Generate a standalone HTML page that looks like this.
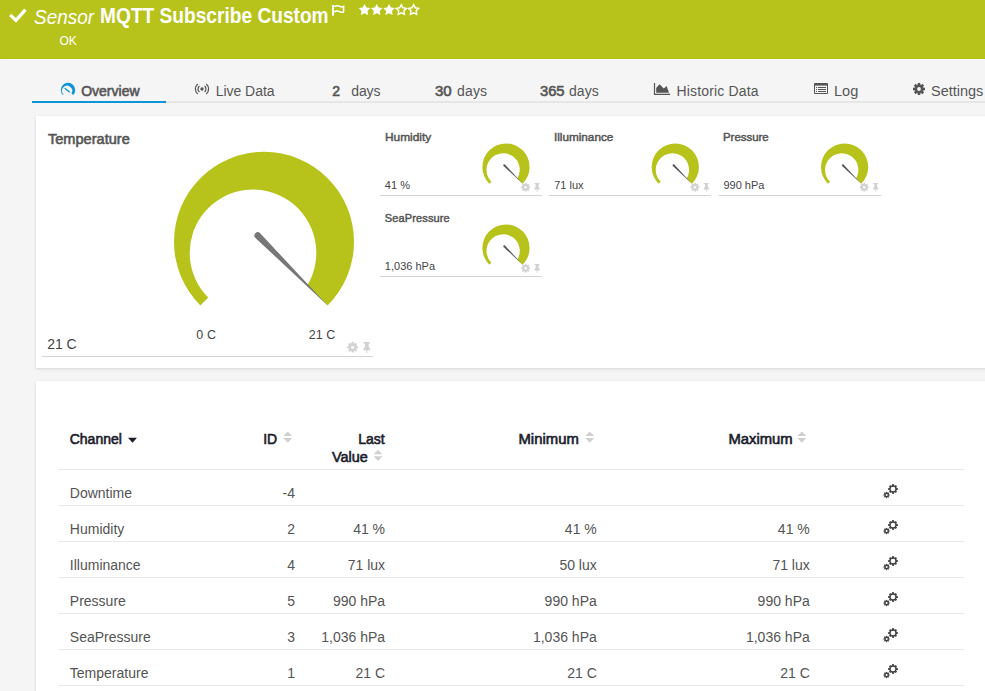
<!DOCTYPE html>
<html><head><meta charset="utf-8"><style>
html,body{margin:0;padding:0;width:985px;height:691px;overflow:hidden;background:#f5f5f5;position:relative}
.abs{position:absolute}
</style></head><body>
<div class="abs" style="left:0;top:0;width:985px;height:59px;background:#b7c31b"></div>
<div class="abs" style="left:0;top:58px;width:985px;height:1px;background:#b3c012"></div>
<div class="abs" style="left:1px;top:59px;width:983px;height:1px;background:#fafafc"></div>
<div class="abs" style="left:32px;top:101px;width:953px;height:2px;background:#e6e6e6"></div>
<div class="abs" style="left:32px;top:101px;width:134px;height:2px;background:#0b95d6"></div>
<div class="abs" style="left:36px;top:116px;width:960px;height:252px;background:#fff;box-shadow:0 1px 3px rgba(0,0,0,0.14)"></div>
<div class="abs" style="left:36px;top:381px;width:960px;height:330px;background:#fff;box-shadow:0 1px 3px rgba(0,0,0,0.14)"></div>
<div class="abs" style="left:42px;top:356px;width:331px;height:1px;background:#d4d4d4"></div>
<div class="abs" style="left:380.0px;top:195.0px;width:162px;height:1px;background:#d4d4d4"></div>
<div class="abs" style="left:549.3px;top:195.0px;width:162px;height:1px;background:#d4d4d4"></div>
<div class="abs" style="left:718.6px;top:195.0px;width:162px;height:1px;background:#d4d4d4"></div>
<div class="abs" style="left:380.0px;top:276.0px;width:162px;height:1px;background:#d4d4d4"></div>
<div class="abs" style="left:59px;top:469px;width:905px;height:1px;background:#e8e8e8"></div>
<div class="abs" style="left:59px;top:505px;width:905px;height:1px;background:#e8e8e8"></div>
<div class="abs" style="left:59px;top:541px;width:905px;height:1px;background:#e8e8e8"></div>
<div class="abs" style="left:59px;top:577px;width:905px;height:1px;background:#e8e8e8"></div>
<div class="abs" style="left:59px;top:613px;width:905px;height:1px;background:#e8e8e8"></div>
<div class="abs" style="left:59px;top:649px;width:905px;height:1px;background:#e8e8e8"></div>
<div class="abs" style="left:59px;top:685px;width:905px;height:1px;background:#e8e8e8"></div>
<svg class="abs" style="left:0;top:0" width="985" height="691" viewBox="0 0 985 691">
<path d="M200.36 305.44 A90.00 90.00 0 1 1 327.64 305.44 L307.39 285.19 A63.30 63.30 0 1 0 208.24 297.56 Z" fill="#b7c31b"/>
<path d="M327.64 305.44 L260.11 233.24 A3.30 3.30 0 0 0 255.44 237.91 Z" fill="#777"/>
<path d="M489.29 183.71 A23.62 23.62 0 1 1 522.71 183.71 L517.39 178.39 A16.62 16.62 0 1 0 491.36 181.64 Z" fill="#b7c31b"/>
<path d="M522.71 183.71 L504.94 164.53 A1.00 1.00 0 0 0 503.53 165.94 Z" fill="#555"/>
<path d="M658.59 183.71 A23.62 23.62 0 1 1 692.01 183.71 L686.69 178.39 A16.62 16.62 0 1 0 660.66 181.64 Z" fill="#b7c31b"/>
<path d="M692.01 183.71 L674.24 164.53 A1.00 1.00 0 0 0 672.83 165.94 Z" fill="#555"/>
<path d="M827.89 183.71 A23.62 23.62 0 1 1 861.31 183.71 L855.99 178.39 A16.62 16.62 0 1 0 829.96 181.64 Z" fill="#b7c31b"/>
<path d="M861.31 183.71 L843.54 164.53 A1.00 1.00 0 0 0 842.13 165.94 Z" fill="#555"/>
<path d="M489.29 264.71 A23.62 23.62 0 1 1 522.71 264.71 L517.39 259.39 A16.62 16.62 0 1 0 491.36 262.64 Z" fill="#b7c31b"/>
<path d="M522.71 264.71 L504.94 245.53 A1.00 1.00 0 0 0 503.53 246.94 Z" fill="#555"/>
<path d="M10.2 14.8 L16.0 20.4 L25.4 9.6" stroke="#fff" stroke-width="3.2" fill="none"/>
<rect x="332" y="5" width="2" height="10.7" fill="#fff"/>
<path d="M334.2 6.6 C336.5 5.2 338.5 5.6 340 6.4 C341.5 7.2 342.6 7.0 343.6 6.4 L343.6 11.8 C342.6 12.4 341.5 12.6 340 11.8 C338.5 11.0 336.5 10.6 334.2 12.0" stroke="#fff" stroke-width="1.5" fill="none"/>
<polygon points="364.50,3.90 366.35,7.45 370.30,8.11 367.50,10.97 368.09,14.94 364.50,13.15 360.91,14.94 361.50,10.97 358.70,8.11 362.65,7.45" fill="#fff"/>
<polygon points="376.77,3.90 378.62,7.45 382.57,8.11 379.77,10.97 380.36,14.94 376.77,13.15 373.18,14.94 373.77,10.97 370.97,8.11 374.92,7.45" fill="#fff"/>
<polygon points="389.04,3.90 390.89,7.45 394.84,8.11 392.04,10.97 392.63,14.94 389.04,13.15 385.45,14.94 386.04,10.97 383.24,8.11 387.19,7.45" fill="#fff"/>
<polygon points="401.31,4.70 402.93,7.78 406.35,8.36 403.93,10.85 404.43,14.29 401.31,12.75 398.19,14.29 398.69,10.85 396.27,8.36 399.69,7.78" fill="none" stroke="#fff" stroke-width="1.45" stroke-linejoin="miter"/>
<polygon points="413.58,4.70 415.20,7.78 418.62,8.36 416.20,10.85 416.70,14.29 413.58,12.75 410.46,14.29 410.96,10.85 408.54,8.36 411.96,7.78" fill="none" stroke="#fff" stroke-width="1.45" stroke-linejoin="miter"/>
<path d="M62.91 95.09 A7.20 7.20 0 1 1 73.09 95.09 L71.47 93.47 A5.06 5.06 0 1 0 63.54 94.46 Z" fill="#0b95d6"/>
<path d="M64.6 88.2 L69.8 92.2" stroke="#0b95d6" stroke-width="1.3"/>
<circle cx="202" cy="89" r="1.7" fill="#555"/>
<path d="M199.43 85.94 A4.00 4.00 0 0 0 199.43 92.06" stroke="#555" stroke-width="1.25" fill="none"/>
<path d="M204.57 92.06 A4.00 4.00 0 0 0 204.57 85.94" stroke="#555" stroke-width="1.25" fill="none"/>
<path d="M197.76 83.94 A6.60 6.60 0 0 0 197.76 94.06" stroke="#555" stroke-width="1.25" fill="none"/>
<path d="M206.24 94.06 A6.60 6.60 0 0 0 206.24 83.94" stroke="#555" stroke-width="1.25" fill="none"/>
<path d="M654.5 83 V94.4 H670.2" stroke="#555" stroke-width="1.2" fill="none"/>
<path d="M656.2 92.7 V88.0 L659.5 84.3 L663.8 88.6 L666.6 86.0 L669.0 92.7 Z" fill="#555"/>
<rect x="814" y="83" width="14" height="11" rx="1" ry="1" fill="#555"/>
<rect x="815" y="85.6" width="12" height="7.4" fill="#f5f5f5"/>
<rect x="816" y="87" width="1" height="1" fill="#555"/>
<rect x="818" y="87" width="8" height="1" fill="#555"/>
<rect x="816" y="89" width="1" height="1" fill="#555"/>
<rect x="818" y="89" width="8" height="1" fill="#555"/>
<rect x="816" y="91" width="1" height="1" fill="#555"/>
<rect x="818" y="91" width="8" height="1" fill="#555"/>
<circle cx="919.00" cy="89.00" r="4.60" fill="#555"/>
<rect x="917.74" y="83.00" width="2.52" height="6.00" fill="#555" transform="rotate(0.0 919.00 89.00)"/>
<rect x="917.74" y="83.00" width="2.52" height="6.00" fill="#555" transform="rotate(45.0 919.00 89.00)"/>
<rect x="917.74" y="83.00" width="2.52" height="6.00" fill="#555" transform="rotate(90.0 919.00 89.00)"/>
<rect x="917.74" y="83.00" width="2.52" height="6.00" fill="#555" transform="rotate(135.0 919.00 89.00)"/>
<rect x="917.74" y="83.00" width="2.52" height="6.00" fill="#555" transform="rotate(180.0 919.00 89.00)"/>
<rect x="917.74" y="83.00" width="2.52" height="6.00" fill="#555" transform="rotate(225.0 919.00 89.00)"/>
<rect x="917.74" y="83.00" width="2.52" height="6.00" fill="#555" transform="rotate(270.0 919.00 89.00)"/>
<rect x="917.74" y="83.00" width="2.52" height="6.00" fill="#555" transform="rotate(315.0 919.00 89.00)"/>
<circle cx="919.00" cy="89.00" r="1.90" fill="#f5f5f5"/>
<circle cx="352.60" cy="347.20" r="4.00" fill="#d2d2d2"/>
<rect x="351.49" y="341.90" width="2.23" height="5.30" fill="#d2d2d2" transform="rotate(0.0 352.60 347.20)"/>
<rect x="351.49" y="341.90" width="2.23" height="5.30" fill="#d2d2d2" transform="rotate(45.0 352.60 347.20)"/>
<rect x="351.49" y="341.90" width="2.23" height="5.30" fill="#d2d2d2" transform="rotate(90.0 352.60 347.20)"/>
<rect x="351.49" y="341.90" width="2.23" height="5.30" fill="#d2d2d2" transform="rotate(135.0 352.60 347.20)"/>
<rect x="351.49" y="341.90" width="2.23" height="5.30" fill="#d2d2d2" transform="rotate(180.0 352.60 347.20)"/>
<rect x="351.49" y="341.90" width="2.23" height="5.30" fill="#d2d2d2" transform="rotate(225.0 352.60 347.20)"/>
<rect x="351.49" y="341.90" width="2.23" height="5.30" fill="#d2d2d2" transform="rotate(270.0 352.60 347.20)"/>
<rect x="351.49" y="341.90" width="2.23" height="5.30" fill="#d2d2d2" transform="rotate(315.0 352.60 347.20)"/>
<circle cx="352.60" cy="347.20" r="1.50" fill="#fff"/>
<path d="M0.6 0 h6.8 v1.4 h-1.0 v3.6 l1.6 2.1 v1.1 h-3.0 v2.9 h-1.0 v-2.9 h-3.0 v-1.1 l1.6 -2.1 v-3.6 h-1.0 Z" fill="#d2d2d2" transform="translate(362.30 342.00) scale(1.000)"/>
<circle cx="525.60" cy="187.20" r="3.30" fill="#d2d2d2"/>
<rect x="524.68" y="182.80" width="1.85" height="4.40" fill="#d2d2d2" transform="rotate(0.0 525.60 187.20)"/>
<rect x="524.68" y="182.80" width="1.85" height="4.40" fill="#d2d2d2" transform="rotate(45.0 525.60 187.20)"/>
<rect x="524.68" y="182.80" width="1.85" height="4.40" fill="#d2d2d2" transform="rotate(90.0 525.60 187.20)"/>
<rect x="524.68" y="182.80" width="1.85" height="4.40" fill="#d2d2d2" transform="rotate(135.0 525.60 187.20)"/>
<rect x="524.68" y="182.80" width="1.85" height="4.40" fill="#d2d2d2" transform="rotate(180.0 525.60 187.20)"/>
<rect x="524.68" y="182.80" width="1.85" height="4.40" fill="#d2d2d2" transform="rotate(225.0 525.60 187.20)"/>
<rect x="524.68" y="182.80" width="1.85" height="4.40" fill="#d2d2d2" transform="rotate(270.0 525.60 187.20)"/>
<rect x="524.68" y="182.80" width="1.85" height="4.40" fill="#d2d2d2" transform="rotate(315.0 525.60 187.20)"/>
<circle cx="525.60" cy="187.20" r="1.20" fill="#fff"/>
<path d="M0.6 0 h6.8 v1.4 h-1.0 v3.6 l1.6 2.1 v1.1 h-3.0 v2.9 h-1.0 v-2.9 h-3.0 v-1.1 l1.6 -2.1 v-3.6 h-1.0 Z" fill="#d2d2d2" transform="translate(533.60 183.00) scale(0.780)"/>
<circle cx="694.90" cy="187.20" r="3.30" fill="#d2d2d2"/>
<rect x="693.98" y="182.80" width="1.85" height="4.40" fill="#d2d2d2" transform="rotate(0.0 694.90 187.20)"/>
<rect x="693.98" y="182.80" width="1.85" height="4.40" fill="#d2d2d2" transform="rotate(45.0 694.90 187.20)"/>
<rect x="693.98" y="182.80" width="1.85" height="4.40" fill="#d2d2d2" transform="rotate(90.0 694.90 187.20)"/>
<rect x="693.98" y="182.80" width="1.85" height="4.40" fill="#d2d2d2" transform="rotate(135.0 694.90 187.20)"/>
<rect x="693.98" y="182.80" width="1.85" height="4.40" fill="#d2d2d2" transform="rotate(180.0 694.90 187.20)"/>
<rect x="693.98" y="182.80" width="1.85" height="4.40" fill="#d2d2d2" transform="rotate(225.0 694.90 187.20)"/>
<rect x="693.98" y="182.80" width="1.85" height="4.40" fill="#d2d2d2" transform="rotate(270.0 694.90 187.20)"/>
<rect x="693.98" y="182.80" width="1.85" height="4.40" fill="#d2d2d2" transform="rotate(315.0 694.90 187.20)"/>
<circle cx="694.90" cy="187.20" r="1.20" fill="#fff"/>
<path d="M0.6 0 h6.8 v1.4 h-1.0 v3.6 l1.6 2.1 v1.1 h-3.0 v2.9 h-1.0 v-2.9 h-3.0 v-1.1 l1.6 -2.1 v-3.6 h-1.0 Z" fill="#d2d2d2" transform="translate(702.90 183.00) scale(0.780)"/>
<circle cx="864.20" cy="187.20" r="3.30" fill="#d2d2d2"/>
<rect x="863.28" y="182.80" width="1.85" height="4.40" fill="#d2d2d2" transform="rotate(0.0 864.20 187.20)"/>
<rect x="863.28" y="182.80" width="1.85" height="4.40" fill="#d2d2d2" transform="rotate(45.0 864.20 187.20)"/>
<rect x="863.28" y="182.80" width="1.85" height="4.40" fill="#d2d2d2" transform="rotate(90.0 864.20 187.20)"/>
<rect x="863.28" y="182.80" width="1.85" height="4.40" fill="#d2d2d2" transform="rotate(135.0 864.20 187.20)"/>
<rect x="863.28" y="182.80" width="1.85" height="4.40" fill="#d2d2d2" transform="rotate(180.0 864.20 187.20)"/>
<rect x="863.28" y="182.80" width="1.85" height="4.40" fill="#d2d2d2" transform="rotate(225.0 864.20 187.20)"/>
<rect x="863.28" y="182.80" width="1.85" height="4.40" fill="#d2d2d2" transform="rotate(270.0 864.20 187.20)"/>
<rect x="863.28" y="182.80" width="1.85" height="4.40" fill="#d2d2d2" transform="rotate(315.0 864.20 187.20)"/>
<circle cx="864.20" cy="187.20" r="1.20" fill="#fff"/>
<path d="M0.6 0 h6.8 v1.4 h-1.0 v3.6 l1.6 2.1 v1.1 h-3.0 v2.9 h-1.0 v-2.9 h-3.0 v-1.1 l1.6 -2.1 v-3.6 h-1.0 Z" fill="#d2d2d2" transform="translate(872.20 183.00) scale(0.780)"/>
<circle cx="525.60" cy="268.20" r="3.30" fill="#d2d2d2"/>
<rect x="524.68" y="263.80" width="1.85" height="4.40" fill="#d2d2d2" transform="rotate(0.0 525.60 268.20)"/>
<rect x="524.68" y="263.80" width="1.85" height="4.40" fill="#d2d2d2" transform="rotate(45.0 525.60 268.20)"/>
<rect x="524.68" y="263.80" width="1.85" height="4.40" fill="#d2d2d2" transform="rotate(90.0 525.60 268.20)"/>
<rect x="524.68" y="263.80" width="1.85" height="4.40" fill="#d2d2d2" transform="rotate(135.0 525.60 268.20)"/>
<rect x="524.68" y="263.80" width="1.85" height="4.40" fill="#d2d2d2" transform="rotate(180.0 525.60 268.20)"/>
<rect x="524.68" y="263.80" width="1.85" height="4.40" fill="#d2d2d2" transform="rotate(225.0 525.60 268.20)"/>
<rect x="524.68" y="263.80" width="1.85" height="4.40" fill="#d2d2d2" transform="rotate(270.0 525.60 268.20)"/>
<rect x="524.68" y="263.80" width="1.85" height="4.40" fill="#d2d2d2" transform="rotate(315.0 525.60 268.20)"/>
<circle cx="525.60" cy="268.20" r="1.20" fill="#fff"/>
<path d="M0.6 0 h6.8 v1.4 h-1.0 v3.6 l1.6 2.1 v1.1 h-3.0 v2.9 h-1.0 v-2.9 h-3.0 v-1.1 l1.6 -2.1 v-3.6 h-1.0 Z" fill="#d2d2d2" transform="translate(533.60 264.00) scale(0.780)"/>
<polygon points="283.30,436.00 287.75,431.50 292.20,436.00" fill="#d0d0d0"/>
<polygon points="283.30,437.90 292.20,437.90 287.75,442.80" fill="#d0d0d0"/>
<polygon points="373.60,454.30 378.05,449.80 382.50,454.30" fill="#d0d0d0"/>
<polygon points="373.60,456.20 382.50,456.20 378.05,461.10" fill="#d0d0d0"/>
<polygon points="585.30,436.00 589.75,431.50 594.20,436.00" fill="#d0d0d0"/>
<polygon points="585.30,437.90 594.20,437.90 589.75,442.80" fill="#d0d0d0"/>
<polygon points="797.40,436.00 801.85,431.50 806.30,436.00" fill="#d0d0d0"/>
<polygon points="797.40,437.90 806.30,437.90 801.85,442.80" fill="#d0d0d0"/>
<polygon points="128,437.8 137,437.8 132.5,442.8" fill="#1c1c2c"/>
<circle cx="893.00" cy="489.00" r="3.70" fill="#444"/>
<rect x="891.99" y="484.20" width="2.02" height="4.80" fill="#444" transform="rotate(0.0 893.00 489.00)"/>
<rect x="891.99" y="484.20" width="2.02" height="4.80" fill="#444" transform="rotate(45.0 893.00 489.00)"/>
<rect x="891.99" y="484.20" width="2.02" height="4.80" fill="#444" transform="rotate(90.0 893.00 489.00)"/>
<rect x="891.99" y="484.20" width="2.02" height="4.80" fill="#444" transform="rotate(135.0 893.00 489.00)"/>
<rect x="891.99" y="484.20" width="2.02" height="4.80" fill="#444" transform="rotate(180.0 893.00 489.00)"/>
<rect x="891.99" y="484.20" width="2.02" height="4.80" fill="#444" transform="rotate(225.0 893.00 489.00)"/>
<rect x="891.99" y="484.20" width="2.02" height="4.80" fill="#444" transform="rotate(270.0 893.00 489.00)"/>
<rect x="891.99" y="484.20" width="2.02" height="4.80" fill="#444" transform="rotate(315.0 893.00 489.00)"/>
<circle cx="893.00" cy="489.00" r="2.30" fill="#fff"/>
<circle cx="886.60" cy="495.00" r="2.40" fill="#444"/>
<rect x="885.95" y="491.90" width="1.30" height="3.10" fill="#444" transform="rotate(0.0 886.60 495.00)"/>
<rect x="885.95" y="491.90" width="1.30" height="3.10" fill="#444" transform="rotate(45.0 886.60 495.00)"/>
<rect x="885.95" y="491.90" width="1.30" height="3.10" fill="#444" transform="rotate(90.0 886.60 495.00)"/>
<rect x="885.95" y="491.90" width="1.30" height="3.10" fill="#444" transform="rotate(135.0 886.60 495.00)"/>
<rect x="885.95" y="491.90" width="1.30" height="3.10" fill="#444" transform="rotate(180.0 886.60 495.00)"/>
<rect x="885.95" y="491.90" width="1.30" height="3.10" fill="#444" transform="rotate(225.0 886.60 495.00)"/>
<rect x="885.95" y="491.90" width="1.30" height="3.10" fill="#444" transform="rotate(270.0 886.60 495.00)"/>
<rect x="885.95" y="491.90" width="1.30" height="3.10" fill="#444" transform="rotate(315.0 886.60 495.00)"/>
<circle cx="886.60" cy="495.00" r="1.00" fill="#fff"/>
<circle cx="893.00" cy="525.00" r="3.70" fill="#444"/>
<rect x="891.99" y="520.20" width="2.02" height="4.80" fill="#444" transform="rotate(0.0 893.00 525.00)"/>
<rect x="891.99" y="520.20" width="2.02" height="4.80" fill="#444" transform="rotate(45.0 893.00 525.00)"/>
<rect x="891.99" y="520.20" width="2.02" height="4.80" fill="#444" transform="rotate(90.0 893.00 525.00)"/>
<rect x="891.99" y="520.20" width="2.02" height="4.80" fill="#444" transform="rotate(135.0 893.00 525.00)"/>
<rect x="891.99" y="520.20" width="2.02" height="4.80" fill="#444" transform="rotate(180.0 893.00 525.00)"/>
<rect x="891.99" y="520.20" width="2.02" height="4.80" fill="#444" transform="rotate(225.0 893.00 525.00)"/>
<rect x="891.99" y="520.20" width="2.02" height="4.80" fill="#444" transform="rotate(270.0 893.00 525.00)"/>
<rect x="891.99" y="520.20" width="2.02" height="4.80" fill="#444" transform="rotate(315.0 893.00 525.00)"/>
<circle cx="893.00" cy="525.00" r="2.30" fill="#fff"/>
<circle cx="886.60" cy="531.00" r="2.40" fill="#444"/>
<rect x="885.95" y="527.90" width="1.30" height="3.10" fill="#444" transform="rotate(0.0 886.60 531.00)"/>
<rect x="885.95" y="527.90" width="1.30" height="3.10" fill="#444" transform="rotate(45.0 886.60 531.00)"/>
<rect x="885.95" y="527.90" width="1.30" height="3.10" fill="#444" transform="rotate(90.0 886.60 531.00)"/>
<rect x="885.95" y="527.90" width="1.30" height="3.10" fill="#444" transform="rotate(135.0 886.60 531.00)"/>
<rect x="885.95" y="527.90" width="1.30" height="3.10" fill="#444" transform="rotate(180.0 886.60 531.00)"/>
<rect x="885.95" y="527.90" width="1.30" height="3.10" fill="#444" transform="rotate(225.0 886.60 531.00)"/>
<rect x="885.95" y="527.90" width="1.30" height="3.10" fill="#444" transform="rotate(270.0 886.60 531.00)"/>
<rect x="885.95" y="527.90" width="1.30" height="3.10" fill="#444" transform="rotate(315.0 886.60 531.00)"/>
<circle cx="886.60" cy="531.00" r="1.00" fill="#fff"/>
<circle cx="893.00" cy="561.00" r="3.70" fill="#444"/>
<rect x="891.99" y="556.20" width="2.02" height="4.80" fill="#444" transform="rotate(0.0 893.00 561.00)"/>
<rect x="891.99" y="556.20" width="2.02" height="4.80" fill="#444" transform="rotate(45.0 893.00 561.00)"/>
<rect x="891.99" y="556.20" width="2.02" height="4.80" fill="#444" transform="rotate(90.0 893.00 561.00)"/>
<rect x="891.99" y="556.20" width="2.02" height="4.80" fill="#444" transform="rotate(135.0 893.00 561.00)"/>
<rect x="891.99" y="556.20" width="2.02" height="4.80" fill="#444" transform="rotate(180.0 893.00 561.00)"/>
<rect x="891.99" y="556.20" width="2.02" height="4.80" fill="#444" transform="rotate(225.0 893.00 561.00)"/>
<rect x="891.99" y="556.20" width="2.02" height="4.80" fill="#444" transform="rotate(270.0 893.00 561.00)"/>
<rect x="891.99" y="556.20" width="2.02" height="4.80" fill="#444" transform="rotate(315.0 893.00 561.00)"/>
<circle cx="893.00" cy="561.00" r="2.30" fill="#fff"/>
<circle cx="886.60" cy="567.00" r="2.40" fill="#444"/>
<rect x="885.95" y="563.90" width="1.30" height="3.10" fill="#444" transform="rotate(0.0 886.60 567.00)"/>
<rect x="885.95" y="563.90" width="1.30" height="3.10" fill="#444" transform="rotate(45.0 886.60 567.00)"/>
<rect x="885.95" y="563.90" width="1.30" height="3.10" fill="#444" transform="rotate(90.0 886.60 567.00)"/>
<rect x="885.95" y="563.90" width="1.30" height="3.10" fill="#444" transform="rotate(135.0 886.60 567.00)"/>
<rect x="885.95" y="563.90" width="1.30" height="3.10" fill="#444" transform="rotate(180.0 886.60 567.00)"/>
<rect x="885.95" y="563.90" width="1.30" height="3.10" fill="#444" transform="rotate(225.0 886.60 567.00)"/>
<rect x="885.95" y="563.90" width="1.30" height="3.10" fill="#444" transform="rotate(270.0 886.60 567.00)"/>
<rect x="885.95" y="563.90" width="1.30" height="3.10" fill="#444" transform="rotate(315.0 886.60 567.00)"/>
<circle cx="886.60" cy="567.00" r="1.00" fill="#fff"/>
<circle cx="893.00" cy="597.00" r="3.70" fill="#444"/>
<rect x="891.99" y="592.20" width="2.02" height="4.80" fill="#444" transform="rotate(0.0 893.00 597.00)"/>
<rect x="891.99" y="592.20" width="2.02" height="4.80" fill="#444" transform="rotate(45.0 893.00 597.00)"/>
<rect x="891.99" y="592.20" width="2.02" height="4.80" fill="#444" transform="rotate(90.0 893.00 597.00)"/>
<rect x="891.99" y="592.20" width="2.02" height="4.80" fill="#444" transform="rotate(135.0 893.00 597.00)"/>
<rect x="891.99" y="592.20" width="2.02" height="4.80" fill="#444" transform="rotate(180.0 893.00 597.00)"/>
<rect x="891.99" y="592.20" width="2.02" height="4.80" fill="#444" transform="rotate(225.0 893.00 597.00)"/>
<rect x="891.99" y="592.20" width="2.02" height="4.80" fill="#444" transform="rotate(270.0 893.00 597.00)"/>
<rect x="891.99" y="592.20" width="2.02" height="4.80" fill="#444" transform="rotate(315.0 893.00 597.00)"/>
<circle cx="893.00" cy="597.00" r="2.30" fill="#fff"/>
<circle cx="886.60" cy="603.00" r="2.40" fill="#444"/>
<rect x="885.95" y="599.90" width="1.30" height="3.10" fill="#444" transform="rotate(0.0 886.60 603.00)"/>
<rect x="885.95" y="599.90" width="1.30" height="3.10" fill="#444" transform="rotate(45.0 886.60 603.00)"/>
<rect x="885.95" y="599.90" width="1.30" height="3.10" fill="#444" transform="rotate(90.0 886.60 603.00)"/>
<rect x="885.95" y="599.90" width="1.30" height="3.10" fill="#444" transform="rotate(135.0 886.60 603.00)"/>
<rect x="885.95" y="599.90" width="1.30" height="3.10" fill="#444" transform="rotate(180.0 886.60 603.00)"/>
<rect x="885.95" y="599.90" width="1.30" height="3.10" fill="#444" transform="rotate(225.0 886.60 603.00)"/>
<rect x="885.95" y="599.90" width="1.30" height="3.10" fill="#444" transform="rotate(270.0 886.60 603.00)"/>
<rect x="885.95" y="599.90" width="1.30" height="3.10" fill="#444" transform="rotate(315.0 886.60 603.00)"/>
<circle cx="886.60" cy="603.00" r="1.00" fill="#fff"/>
<circle cx="893.00" cy="633.00" r="3.70" fill="#444"/>
<rect x="891.99" y="628.20" width="2.02" height="4.80" fill="#444" transform="rotate(0.0 893.00 633.00)"/>
<rect x="891.99" y="628.20" width="2.02" height="4.80" fill="#444" transform="rotate(45.0 893.00 633.00)"/>
<rect x="891.99" y="628.20" width="2.02" height="4.80" fill="#444" transform="rotate(90.0 893.00 633.00)"/>
<rect x="891.99" y="628.20" width="2.02" height="4.80" fill="#444" transform="rotate(135.0 893.00 633.00)"/>
<rect x="891.99" y="628.20" width="2.02" height="4.80" fill="#444" transform="rotate(180.0 893.00 633.00)"/>
<rect x="891.99" y="628.20" width="2.02" height="4.80" fill="#444" transform="rotate(225.0 893.00 633.00)"/>
<rect x="891.99" y="628.20" width="2.02" height="4.80" fill="#444" transform="rotate(270.0 893.00 633.00)"/>
<rect x="891.99" y="628.20" width="2.02" height="4.80" fill="#444" transform="rotate(315.0 893.00 633.00)"/>
<circle cx="893.00" cy="633.00" r="2.30" fill="#fff"/>
<circle cx="886.60" cy="639.00" r="2.40" fill="#444"/>
<rect x="885.95" y="635.90" width="1.30" height="3.10" fill="#444" transform="rotate(0.0 886.60 639.00)"/>
<rect x="885.95" y="635.90" width="1.30" height="3.10" fill="#444" transform="rotate(45.0 886.60 639.00)"/>
<rect x="885.95" y="635.90" width="1.30" height="3.10" fill="#444" transform="rotate(90.0 886.60 639.00)"/>
<rect x="885.95" y="635.90" width="1.30" height="3.10" fill="#444" transform="rotate(135.0 886.60 639.00)"/>
<rect x="885.95" y="635.90" width="1.30" height="3.10" fill="#444" transform="rotate(180.0 886.60 639.00)"/>
<rect x="885.95" y="635.90" width="1.30" height="3.10" fill="#444" transform="rotate(225.0 886.60 639.00)"/>
<rect x="885.95" y="635.90" width="1.30" height="3.10" fill="#444" transform="rotate(270.0 886.60 639.00)"/>
<rect x="885.95" y="635.90" width="1.30" height="3.10" fill="#444" transform="rotate(315.0 886.60 639.00)"/>
<circle cx="886.60" cy="639.00" r="1.00" fill="#fff"/>
<circle cx="893.00" cy="669.00" r="3.70" fill="#444"/>
<rect x="891.99" y="664.20" width="2.02" height="4.80" fill="#444" transform="rotate(0.0 893.00 669.00)"/>
<rect x="891.99" y="664.20" width="2.02" height="4.80" fill="#444" transform="rotate(45.0 893.00 669.00)"/>
<rect x="891.99" y="664.20" width="2.02" height="4.80" fill="#444" transform="rotate(90.0 893.00 669.00)"/>
<rect x="891.99" y="664.20" width="2.02" height="4.80" fill="#444" transform="rotate(135.0 893.00 669.00)"/>
<rect x="891.99" y="664.20" width="2.02" height="4.80" fill="#444" transform="rotate(180.0 893.00 669.00)"/>
<rect x="891.99" y="664.20" width="2.02" height="4.80" fill="#444" transform="rotate(225.0 893.00 669.00)"/>
<rect x="891.99" y="664.20" width="2.02" height="4.80" fill="#444" transform="rotate(270.0 893.00 669.00)"/>
<rect x="891.99" y="664.20" width="2.02" height="4.80" fill="#444" transform="rotate(315.0 893.00 669.00)"/>
<circle cx="893.00" cy="669.00" r="2.30" fill="#fff"/>
<circle cx="886.60" cy="675.00" r="2.40" fill="#444"/>
<rect x="885.95" y="671.90" width="1.30" height="3.10" fill="#444" transform="rotate(0.0 886.60 675.00)"/>
<rect x="885.95" y="671.90" width="1.30" height="3.10" fill="#444" transform="rotate(45.0 886.60 675.00)"/>
<rect x="885.95" y="671.90" width="1.30" height="3.10" fill="#444" transform="rotate(90.0 886.60 675.00)"/>
<rect x="885.95" y="671.90" width="1.30" height="3.10" fill="#444" transform="rotate(135.0 886.60 675.00)"/>
<rect x="885.95" y="671.90" width="1.30" height="3.10" fill="#444" transform="rotate(180.0 886.60 675.00)"/>
<rect x="885.95" y="671.90" width="1.30" height="3.10" fill="#444" transform="rotate(225.0 886.60 675.00)"/>
<rect x="885.95" y="671.90" width="1.30" height="3.10" fill="#444" transform="rotate(270.0 886.60 675.00)"/>
<rect x="885.95" y="671.90" width="1.30" height="3.10" fill="#444" transform="rotate(315.0 886.60 675.00)"/>
<circle cx="886.60" cy="675.00" r="1.00" fill="#fff"/>
</svg>
<div style="font-family:'Liberation Sans',sans-serif;font-size:20px;font-weight:normal;font-style:italic;white-space:nowrap;position:absolute;top:7.07px;line-height:20px;color:#fff;left:33.70px;transform:scaleX(0.9454);transform-origin:0.80px 0">Sensor</div>
<div style="font-family:'Liberation Sans',sans-serif;font-size:21.5px;font-weight:bold;font-style:normal;white-space:nowrap;position:absolute;top:6.20px;line-height:21.5px;color:#fff;left:99.54px;transform:scaleX(0.8898);transform-origin:0.86px 0">MQTT Subscribe Custom</div>
<div style="font-family:'Liberation Sans',sans-serif;font-size:12px;font-weight:normal;font-style:normal;white-space:nowrap;position:absolute;top:34.54px;line-height:12px;color:#fff;letter-spacing:-0.184px;left:59.52px">OK</div>
<div style="font-family:'Liberation Sans',sans-serif;font-size:14px;font-weight:normal;font-style:normal;white-space:nowrap;-webkit-text-stroke:0.59px #555;position:absolute;top:84.15px;line-height:14px;color:#555;letter-spacing:0.009px;left:81.14px">Overview</div>
<div style="font-family:'Liberation Sans',sans-serif;font-size:14px;font-weight:normal;font-style:normal;white-space:nowrap;position:absolute;top:84.15px;line-height:14px;color:#555;letter-spacing:-0.042px;left:215.74px">Live Data</div>
<div style="font-family:'Liberation Sans',sans-serif;font-size:14px;font-weight:normal;font-style:normal;white-space:nowrap;-webkit-text-stroke:0.59px #555;position:absolute;top:84.15px;line-height:14px;color:#555;left:332.24px">2</div>
<div style="font-family:'Liberation Sans',sans-serif;font-size:14px;font-weight:normal;font-style:normal;white-space:nowrap;position:absolute;top:84.15px;line-height:14px;color:#555;letter-spacing:-0.119px;left:351.24px">days</div>
<div style="font-family:'Liberation Sans',sans-serif;font-size:14px;font-weight:normal;font-style:normal;white-space:nowrap;-webkit-text-stroke:0.59px #555;position:absolute;top:84.15px;line-height:14px;color:#555;left:434.94px;transform:scaleX(1.0721);transform-origin:0.56px 0">30</div>
<div style="font-family:'Liberation Sans',sans-serif;font-size:14px;font-weight:normal;font-style:normal;white-space:nowrap;position:absolute;top:84.15px;line-height:14px;color:#555;letter-spacing:0.147px;left:457.04px">days</div>
<div style="font-family:'Liberation Sans',sans-serif;font-size:14px;font-weight:normal;font-style:normal;white-space:nowrap;-webkit-text-stroke:0.59px #555;position:absolute;top:84.15px;line-height:14px;color:#555;left:540.24px;transform:scaleX(1.0522);transform-origin:0.56px 0">365</div>
<div style="font-family:'Liberation Sans',sans-serif;font-size:14px;font-weight:normal;font-style:normal;white-space:nowrap;position:absolute;top:84.15px;line-height:14px;color:#555;letter-spacing:0.014px;left:569.04px">days</div>
<div style="font-family:'Liberation Sans',sans-serif;font-size:14px;font-weight:normal;font-style:normal;white-space:nowrap;position:absolute;top:84.15px;line-height:14px;color:#555;letter-spacing:0.165px;left:676.44px">Historic Data</div>
<div style="font-family:'Liberation Sans',sans-serif;font-size:14px;font-weight:normal;font-style:normal;white-space:nowrap;position:absolute;top:84.15px;line-height:14px;color:#555;left:834.24px;transform:scaleX(1.0387);transform-origin:0.56px 0">Log</div>
<div style="font-family:'Liberation Sans',sans-serif;font-size:14px;font-weight:normal;font-style:normal;white-space:nowrap;position:absolute;top:84.15px;line-height:14px;color:#555;left:931.04px;transform:scaleX(1.0329);transform-origin:0.56px 0">Settings</div>
<div style="font-family:'Liberation Sans',sans-serif;font-size:14px;font-weight:normal;font-style:normal;white-space:nowrap;-webkit-text-stroke:0.59px #555;position:absolute;top:132.35px;line-height:14px;color:#555;left:47.54px;transform:scaleX(1.0404);transform-origin:0.56px 0">Temperature</div>
<div style="font-family:'Liberation Sans',sans-serif;font-size:14px;font-weight:normal;font-style:normal;white-space:nowrap;position:absolute;top:337.15px;line-height:14px;color:#444;left:47.14px">21 C</div>
<div style="font-family:'Liberation Sans',sans-serif;font-size:12.5px;font-weight:normal;font-style:normal;white-space:nowrap;position:absolute;top:328.72px;line-height:12.5px;color:#444;letter-spacing:0.123px;left:196.30px">0 C</div>
<div style="font-family:'Liberation Sans',sans-serif;font-size:12.5px;font-weight:normal;font-style:normal;white-space:nowrap;position:absolute;top:328.72px;line-height:12.5px;color:#444;letter-spacing:0.031px;left:308.80px">21 C</div>
<div style="font-family:'Liberation Sans',sans-serif;font-size:11px;font-weight:normal;font-style:normal;white-space:nowrap;-webkit-text-stroke:0.46px #555;position:absolute;top:131.79px;line-height:11px;color:#555;left:384.86px;transform:scaleX(1.0807);transform-origin:0.44px 0">Humidity</div>
<div style="font-family:'Liberation Sans',sans-serif;font-size:11px;font-weight:normal;font-style:normal;white-space:nowrap;position:absolute;top:180.39px;line-height:11px;color:#444;left:384.86px">41 %</div>
<div style="font-family:'Liberation Sans',sans-serif;font-size:11px;font-weight:normal;font-style:normal;white-space:nowrap;-webkit-text-stroke:0.46px #555;position:absolute;top:131.79px;line-height:11px;color:#555;left:554.16px;transform:scaleX(1.0665);transform-origin:0.44px 0">Illuminance</div>
<div style="font-family:'Liberation Sans',sans-serif;font-size:11px;font-weight:normal;font-style:normal;white-space:nowrap;position:absolute;top:180.39px;line-height:11px;color:#444;left:554.16px">71 lux</div>
<div style="font-family:'Liberation Sans',sans-serif;font-size:11px;font-weight:normal;font-style:normal;white-space:nowrap;-webkit-text-stroke:0.46px #555;position:absolute;top:131.79px;line-height:11px;color:#555;left:723.46px;transform:scaleX(1.0382);transform-origin:0.44px 0">Pressure</div>
<div style="font-family:'Liberation Sans',sans-serif;font-size:11px;font-weight:normal;font-style:normal;white-space:nowrap;position:absolute;top:180.39px;line-height:11px;color:#444;left:723.46px">990 hPa</div>
<div style="font-family:'Liberation Sans',sans-serif;font-size:11px;font-weight:normal;font-style:normal;white-space:nowrap;-webkit-text-stroke:0.46px #555;position:absolute;top:212.79px;line-height:11px;color:#555;letter-spacing:0.119px;left:384.86px">SeaPressure</div>
<div style="font-family:'Liberation Sans',sans-serif;font-size:11px;font-weight:normal;font-style:normal;white-space:nowrap;position:absolute;top:261.39px;line-height:11px;color:#444;left:384.86px">1,036 hPa</div>
<div style="font-family:'Liberation Sans',sans-serif;font-size:14px;font-weight:normal;font-style:normal;white-space:nowrap;-webkit-text-stroke:0.59px #1c1c2c;position:absolute;top:431.95px;line-height:14px;color:#1c1c2c;letter-spacing:0.027px;left:69.64px">Channel</div>
<div style="font-family:'Liberation Sans',sans-serif;font-size:14px;font-weight:normal;font-style:normal;white-space:nowrap;-webkit-text-stroke:0.59px #1c1c2c;position:absolute;top:432.15px;line-height:14px;color:#1c1c2c;right:707.84px">ID</div>
<div style="font-family:'Liberation Sans',sans-serif;font-size:14px;font-weight:normal;font-style:normal;white-space:nowrap;-webkit-text-stroke:0.59px #1c1c2c;position:absolute;top:432.15px;line-height:14px;color:#1c1c2c;right:600.24px">Last</div>
<div style="font-family:'Liberation Sans',sans-serif;font-size:14px;font-weight:normal;font-style:normal;white-space:nowrap;-webkit-text-stroke:0.59px #1c1c2c;position:absolute;top:450.15px;line-height:14px;color:#1c1c2c;right:617.54px;transform:scaleX(1.0309);transform-origin:100% 0">Value</div>
<div style="font-family:'Liberation Sans',sans-serif;font-size:14px;font-weight:normal;font-style:normal;white-space:nowrap;-webkit-text-stroke:0.59px #1c1c2c;position:absolute;top:432.15px;line-height:14px;color:#1c1c2c;right:405.84px;transform:scaleX(1.0618);transform-origin:100% 0">Minimum</div>
<div style="font-family:'Liberation Sans',sans-serif;font-size:14px;font-weight:normal;font-style:normal;white-space:nowrap;-webkit-text-stroke:0.59px #1c1c2c;position:absolute;top:432.15px;line-height:14px;color:#1c1c2c;right:192.44px;transform:scaleX(1.0579);transform-origin:100% 0">Maximum</div>
<div style="font-family:'Liberation Sans',sans-serif;font-size:14px;font-weight:normal;font-style:normal;white-space:nowrap;position:absolute;top:486.15px;line-height:14px;color:#545454;left:69.84px">Downtime</div>
<div style="font-family:'Liberation Sans',sans-serif;font-size:14px;font-weight:normal;font-style:normal;white-space:nowrap;position:absolute;top:486.15px;line-height:14px;color:#545454;right:689.94px">-4</div>
<div style="font-family:'Liberation Sans',sans-serif;font-size:14px;font-weight:normal;font-style:normal;white-space:nowrap;position:absolute;top:522.15px;line-height:14px;color:#545454;left:69.84px">Humidity</div>
<div style="font-family:'Liberation Sans',sans-serif;font-size:14px;font-weight:normal;font-style:normal;white-space:nowrap;position:absolute;top:522.15px;line-height:14px;color:#545454;right:689.94px">2</div>
<div style="font-family:'Liberation Sans',sans-serif;font-size:14px;font-weight:normal;font-style:normal;white-space:nowrap;position:absolute;top:522.15px;line-height:14px;color:#545454;right:599.94px">41 %</div>
<div style="font-family:'Liberation Sans',sans-serif;font-size:14px;font-weight:normal;font-style:normal;white-space:nowrap;position:absolute;top:522.15px;line-height:14px;color:#545454;right:388.24px">41 %</div>
<div style="font-family:'Liberation Sans',sans-serif;font-size:14px;font-weight:normal;font-style:normal;white-space:nowrap;position:absolute;top:522.15px;line-height:14px;color:#545454;right:175.24px">41 %</div>
<div style="font-family:'Liberation Sans',sans-serif;font-size:14px;font-weight:normal;font-style:normal;white-space:nowrap;position:absolute;top:558.15px;line-height:14px;color:#545454;left:69.84px">Illuminance</div>
<div style="font-family:'Liberation Sans',sans-serif;font-size:14px;font-weight:normal;font-style:normal;white-space:nowrap;position:absolute;top:558.15px;line-height:14px;color:#545454;right:689.94px">4</div>
<div style="font-family:'Liberation Sans',sans-serif;font-size:14px;font-weight:normal;font-style:normal;white-space:nowrap;position:absolute;top:558.15px;line-height:14px;color:#545454;right:599.94px">71 lux</div>
<div style="font-family:'Liberation Sans',sans-serif;font-size:14px;font-weight:normal;font-style:normal;white-space:nowrap;position:absolute;top:558.15px;line-height:14px;color:#545454;right:388.24px">50 lux</div>
<div style="font-family:'Liberation Sans',sans-serif;font-size:14px;font-weight:normal;font-style:normal;white-space:nowrap;position:absolute;top:558.15px;line-height:14px;color:#545454;right:175.24px">71 lux</div>
<div style="font-family:'Liberation Sans',sans-serif;font-size:14px;font-weight:normal;font-style:normal;white-space:nowrap;position:absolute;top:594.15px;line-height:14px;color:#545454;left:69.84px">Pressure</div>
<div style="font-family:'Liberation Sans',sans-serif;font-size:14px;font-weight:normal;font-style:normal;white-space:nowrap;position:absolute;top:594.15px;line-height:14px;color:#545454;right:689.94px">5</div>
<div style="font-family:'Liberation Sans',sans-serif;font-size:14px;font-weight:normal;font-style:normal;white-space:nowrap;position:absolute;top:594.15px;line-height:14px;color:#545454;right:599.94px">990 hPa</div>
<div style="font-family:'Liberation Sans',sans-serif;font-size:14px;font-weight:normal;font-style:normal;white-space:nowrap;position:absolute;top:594.15px;line-height:14px;color:#545454;right:388.24px">990 hPa</div>
<div style="font-family:'Liberation Sans',sans-serif;font-size:14px;font-weight:normal;font-style:normal;white-space:nowrap;position:absolute;top:594.15px;line-height:14px;color:#545454;right:175.24px">990 hPa</div>
<div style="font-family:'Liberation Sans',sans-serif;font-size:14px;font-weight:normal;font-style:normal;white-space:nowrap;position:absolute;top:630.15px;line-height:14px;color:#545454;left:69.84px">SeaPressure</div>
<div style="font-family:'Liberation Sans',sans-serif;font-size:14px;font-weight:normal;font-style:normal;white-space:nowrap;position:absolute;top:630.15px;line-height:14px;color:#545454;right:689.94px">3</div>
<div style="font-family:'Liberation Sans',sans-serif;font-size:14px;font-weight:normal;font-style:normal;white-space:nowrap;position:absolute;top:630.15px;line-height:14px;color:#545454;right:599.94px">1,036 hPa</div>
<div style="font-family:'Liberation Sans',sans-serif;font-size:14px;font-weight:normal;font-style:normal;white-space:nowrap;position:absolute;top:630.15px;line-height:14px;color:#545454;right:388.24px">1,036 hPa</div>
<div style="font-family:'Liberation Sans',sans-serif;font-size:14px;font-weight:normal;font-style:normal;white-space:nowrap;position:absolute;top:630.15px;line-height:14px;color:#545454;right:175.24px">1,036 hPa</div>
<div style="font-family:'Liberation Sans',sans-serif;font-size:14px;font-weight:normal;font-style:normal;white-space:nowrap;position:absolute;top:666.15px;line-height:14px;color:#545454;left:69.84px">Temperature</div>
<div style="font-family:'Liberation Sans',sans-serif;font-size:14px;font-weight:normal;font-style:normal;white-space:nowrap;position:absolute;top:666.15px;line-height:14px;color:#545454;right:689.94px">1</div>
<div style="font-family:'Liberation Sans',sans-serif;font-size:14px;font-weight:normal;font-style:normal;white-space:nowrap;position:absolute;top:666.15px;line-height:14px;color:#545454;right:599.94px">21 C</div>
<div style="font-family:'Liberation Sans',sans-serif;font-size:14px;font-weight:normal;font-style:normal;white-space:nowrap;position:absolute;top:666.15px;line-height:14px;color:#545454;right:388.24px">21 C</div>
<div style="font-family:'Liberation Sans',sans-serif;font-size:14px;font-weight:normal;font-style:normal;white-space:nowrap;position:absolute;top:666.15px;line-height:14px;color:#545454;right:175.24px">21 C</div>
</body></html>
